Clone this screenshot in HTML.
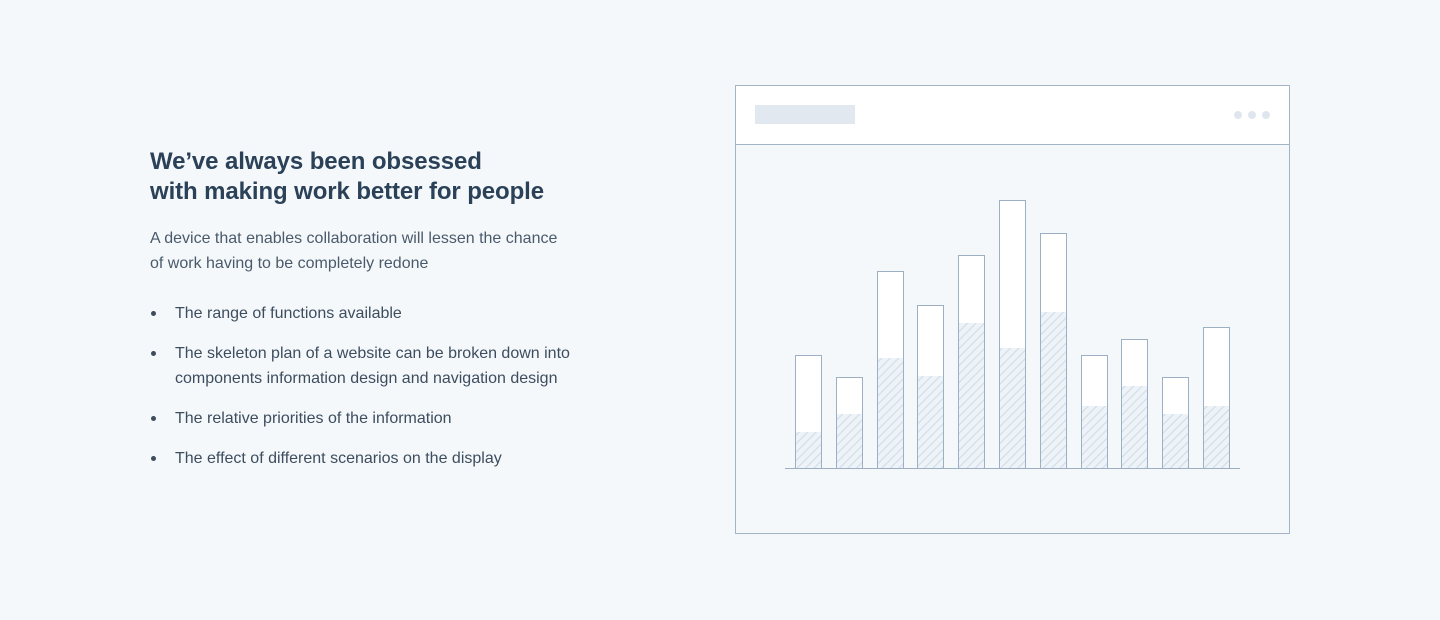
<!DOCTYPE html>
<html><head><meta charset="utf-8"><style>
*{margin:0;padding:0;box-sizing:border-box}
body{width:1440px;height:620px;background:#f4f8fb;font-family:"Liberation Sans",sans-serif;position:relative;overflow:hidden}
h1{position:absolute;left:150px;top:147px;font-size:24px;line-height:30px;color:#2b4158;font-weight:bold;letter-spacing:-0.1px}
p{position:absolute;left:150px;top:226px;font-size:16px;line-height:25px;color:#4a5a6a;width:445px}
ul{position:absolute;left:150px;top:301px;list-style:none;font-size:16px;line-height:25px;color:#3d4d5e}
li{position:relative;padding-left:25px;margin-bottom:15px}
li:before{content:"";position:absolute;left:1px;top:10px;width:5px;height:5px;border-radius:50%;background:#3d4d5e}
</style></head><body>
<h1>We’ve always been obsessed<br>with making work better for people</h1>
<p>A device that enables collaboration will lessen the chance<br>of work having to be completely redone</p>
<ul>
<li>The range of functions available</li>
<li>The skeleton plan of a website can be broken down into<br>components information design and navigation design</li>
<li>The relative priorities of the information</li>
<li>The effect of different scenarios on the display</li>
</ul>
<svg style="position:absolute;left:0;top:0" width="1440" height="620">
<defs><pattern id="h" width="6" height="6" patternUnits="userSpaceOnUse" patternTransform="rotate(45)"><rect width="6" height="6" fill="#eef3f8"/><line x1="0" y1="0" x2="0" y2="6" stroke="#d3deea" stroke-width="2.5"/></pattern></defs>
<rect x="735.5" y="85.5" width="554" height="448" fill="#f4f8fb" stroke="#a3b4c6"/>
<rect x="736" y="86" width="553" height="58" fill="#fff"/>
<line x1="736" y1="144.5" x2="1289" y2="144.5" stroke="#a3b4c6"/>
<rect x="755" y="105" width="100" height="19" fill="#e1e8f0"/>
<circle cx="1238" cy="115" r="4" fill="#dfe6ee"/><circle cx="1252" cy="115" r="4" fill="#dfe6ee"/><circle cx="1266" cy="115" r="4" fill="#dfe6ee"/>
<g stroke="#9db0c3" stroke-width="1">
<rect x="795.5" y="355.5" width="26" height="113" fill="#fff"/><rect x="796" y="432" width="25" height="36" fill="url(#h)" stroke="none"/>
<rect x="836.5" y="377.5" width="26" height="91" fill="#fff"/><rect x="837" y="414" width="25" height="54" fill="url(#h)" stroke="none"/>
<rect x="877.5" y="271.5" width="26" height="197" fill="#fff"/><rect x="878" y="358" width="25" height="110" fill="url(#h)" stroke="none"/>
<rect x="917.5" y="305.5" width="26" height="163" fill="#fff"/><rect x="918" y="376" width="25" height="92" fill="url(#h)" stroke="none"/>
<rect x="958.5" y="255.5" width="26" height="213" fill="#fff"/><rect x="959" y="323" width="25" height="145" fill="url(#h)" stroke="none"/>
<rect x="999.5" y="200.5" width="26" height="268" fill="#fff"/><rect x="1000" y="348" width="25" height="120" fill="url(#h)" stroke="none"/>
<rect x="1040.5" y="233.5" width="26" height="235" fill="#fff"/><rect x="1041" y="312" width="25" height="156" fill="url(#h)" stroke="none"/>
<rect x="1081.5" y="355.5" width="26" height="113" fill="#fff"/><rect x="1082" y="406" width="25" height="62" fill="url(#h)" stroke="none"/>
<rect x="1121.5" y="339.5" width="26" height="129" fill="#fff"/><rect x="1122" y="386" width="25" height="82" fill="url(#h)" stroke="none"/>
<rect x="1162.5" y="377.5" width="26" height="91" fill="#fff"/><rect x="1163" y="414" width="25" height="54" fill="url(#h)" stroke="none"/>
<rect x="1203.5" y="327.5" width="26" height="141" fill="#fff"/><rect x="1204" y="406" width="25" height="62" fill="url(#h)" stroke="none"/>
<line x1="785" y1="468.5" x2="1240" y2="468.5"/>
</g>
</svg>
</body></html>
